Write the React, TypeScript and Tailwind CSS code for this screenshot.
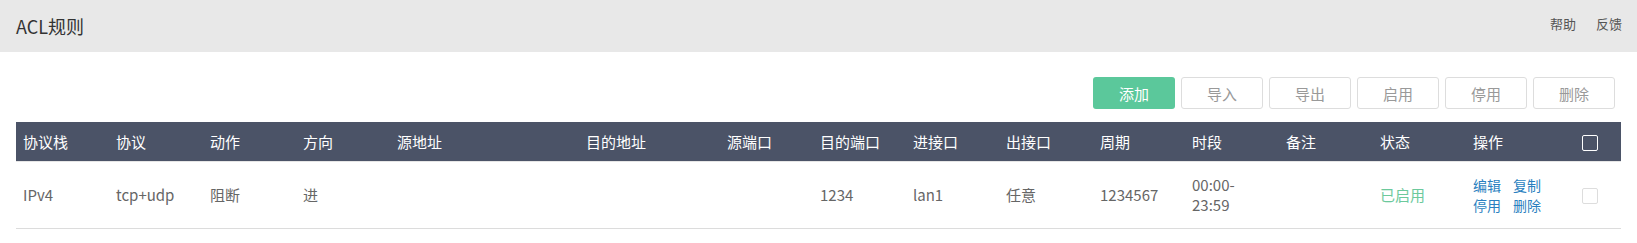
import React from "react";

const cols = [93, 94, 93, 94, 189, 141, 93, 93, 93, 94, 92, 94, 94, 93, 93, 62];
const heads = ["协议栈", "协议", "动作", "方向", "源地址", "目的地址", "源端口", "目的端口", "进接口", "出接口", "周期", "时段", "备注", "状态", "操作"];

export default function App() {
  return (
    <div className="w-[1637px] h-[243px] bg-white font-['Noto_Sans_CJK_SC','Noto_Sans',sans-serif] text-[#666]">
      <div className="h-[52px] bg-[#e8e8e8] flex items-center justify-between pl-4 pr-[15px]">
        <div className="text-[18px] leading-none text-[#333]">ACL规则</div>
        <div className="flex gap-[20px] text-[13px] leading-none text-[#555] -mt-[5px]">
          <span>帮助</span>
          <span>反馈</span>
        </div>
      </div>
      <div className="px-4">
        <div className="flex justify-end gap-[6px] pr-[6px] mt-[25px]">
          <button className="w-[82px] h-[32px] rounded-[3px] bg-[#5bc89b] text-white text-[15px] leading-none">添加</button>
          {["导入", "导出", "启用", "停用", "删除"].map((t) => (
            <button key={t} className="w-[82px] h-[32px] rounded-[3px] border border-[#dddddd] bg-white text-[#999] text-[15px] leading-none">
              {t}
            </button>
          ))}
        </div>
        <table className="mt-[13px] w-[1605px] table-fixed border-collapse text-[15px]">
          <colgroup>
            {cols.map((w, i) => (
              <col key={i} style={{ width: w }} />
            ))}
          </colgroup>
          <thead>
            <tr className="h-[39px] bg-[#4b5367] text-white">
              {heads.map((h) => (
                <th key={h} className="pl-[7px] text-left font-normal leading-none">{h}</th>
              ))}
              <th className="text-center">
                <span className="inline-block w-[16px] h-[16px] border border-white rounded-[2px] align-middle" />
              </th>
            </tr>
          </thead>
          <tbody>
            <tr className="h-[67px] border-t border-[#e6e6e6] border-b border-b-[#dcdcdc] leading-[20px]">
              <td className="pl-[7px]">IPv4</td>
              <td className="pl-[7px]">tcp+udp</td>
              <td className="pl-[7px]">阻断</td>
              <td className="pl-[7px]">进</td>
              <td className="pl-[7px]"></td>
              <td className="pl-[7px]"></td>
              <td className="pl-[7px]"></td>
              <td className="pl-[7px]">1234</td>
              <td className="pl-[7px]">lan1</td>
              <td className="pl-[7px]">任意</td>
              <td className="pl-[7px]">1234567</td>
              <td className="pl-[7px]">
                <div>00:00-</div>
                <div>23:59</div>
              </td>
              <td className="pl-[7px]"></td>
              <td className="pl-[7px] text-[#6cc99c]">已启用</td>
              <td className="pl-[7px]">
                <div className="grid grid-cols-[auto_auto] w-fit gap-x-[12px] text-[14px] text-[#2a7fc0]">
                  <span>编辑</span>
                  <span>复制</span>
                  <span>停用</span>
                  <span>删除</span>
                </div>
              </td>
              <td className="text-center">
                <span className="inline-block w-[16px] h-[16px] border border-[#dddddd] rounded-[2px] bg-white align-middle" />
              </td>
            </tr>
          </tbody>
        </table>
      </div>
    </div>
  );
}
